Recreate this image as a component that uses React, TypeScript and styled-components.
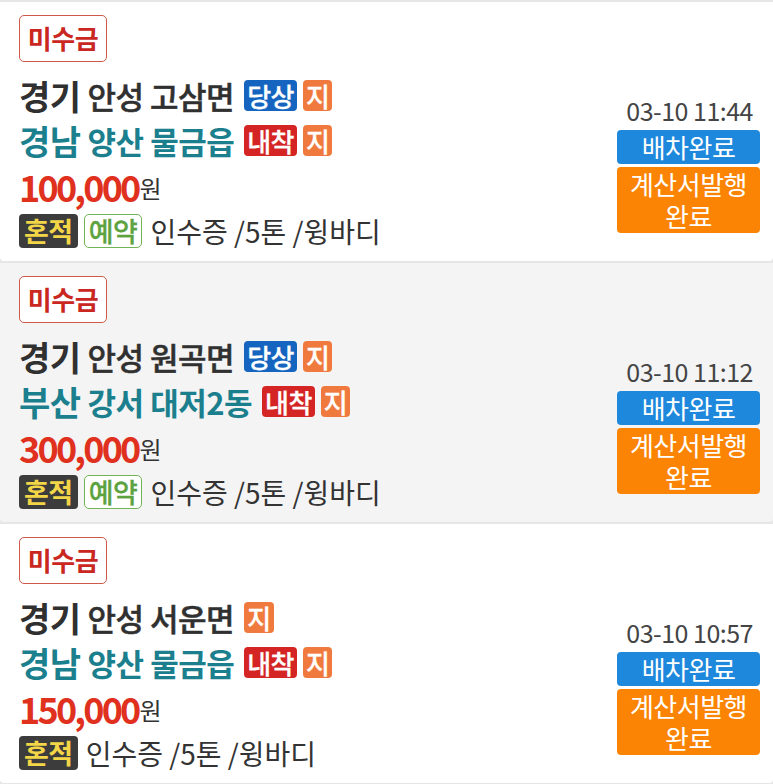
import React from 'react';
import styled, { createGlobalStyle } from 'styled-components';

const GlobalStyle = createGlobalStyle`
  html, body {
    margin: 0;
    padding: 0;
    background: #e6e6e6;
    font-family: "Noto Sans CJK KR", "Noto Sans", sans-serif;
  }
`;

type TagKind = 'blue' | 'red' | 'orange';

type Order = {
  id: number;
  fromMain: string;
  fromSub: string;
  fromTags: TagKind[];
  toMain: string;
  toSub: string;
  toTags: TagKind[];
  price: string;
  reserved: boolean;
  time: string;
  shaded?: boolean;
};

const tagText: Record<TagKind, string> = {
  blue: '당상',
  red: '내착',
  orange: '지',
};

const tagColor: Record<TagKind, string> = {
  blue: '#1565c0',
  red: '#d42424',
  orange: '#f07a3e',
};

const orders: Order[] = [
  {
    id: 1,
    fromMain: '경기', fromSub: '안성 고삼면', fromTags: ['blue', 'orange'],
    toMain: '경남', toSub: '양산 물금읍', toTags: ['red', 'orange'],
    price: '100,000', reserved: true, time: '03-10 11:44',
  },
  {
    id: 2,
    fromMain: '경기', fromSub: '안성 원곡면', fromTags: ['blue', 'orange'],
    toMain: '부산', toSub: '강서 대저2동', toTags: ['red', 'orange'],
    price: '300,000', reserved: true, time: '03-10 11:12', shaded: true,
  },
  {
    id: 3,
    fromMain: '경기', fromSub: '안성 서운면', fromTags: ['orange'],
    toMain: '경남', toSub: '양산 물금읍', toTags: ['red', 'orange'],
    price: '150,000', reserved: false, time: '03-10 10:57',
  },
];

export default function App() {
  return (
    <>
      <GlobalStyle />
      <List>
        {orders.map((o) => (
          <Card key={o.id} $shaded={o.shaded}>
            <Left>
              <Unpaid>미수금</Unpaid>
              <Line>
                <Main>{o.fromMain}</Main>
                <Sub>{o.fromSub}</Sub>
                {o.fromTags.map((t, i) => (
                  <Tag key={i} $color={tagColor[t]}>{tagText[t]}</Tag>
                ))}
              </Line>
              <Line $teal>
                <Main>{o.toMain}</Main>
                <Sub $bold>{o.toSub}</Sub>
                {o.toTags.map((t, i) => (
                  <Tag key={i} $color={tagColor[t]}>{tagText[t]}</Tag>
                ))}
              </Line>
              <Line>
                <Price>{o.price}</Price>
                <Won>원</Won>
              </Line>
              <Line>
                <Mixed>혼적</Mixed>
                {o.reserved && <Reserved>예약</Reserved>}
                <Info>인수증 /5톤 /윙바디</Info>
              </Line>
            </Left>
            <Right>
              <Time>{o.time}</Time>
              <Status $color="#1e88dc">배차완료</Status>
              <Status $color="#fb8404">계산서발행 완료</Status>
            </Right>
          </Card>
        ))}
      </List>
    </>
  );
}

const List = styled.div`
  display: flex;
  flex-direction: column;
  gap: 2px;
  padding-top: 2px;
  width: 773px;
  height: 784px;
  overflow: hidden;
`;

const Card = styled.div<{ $shaded?: boolean }>`
  display: flex;
  justify-content: space-between;
  flex-shrink: 0;
  height: 259px;
  box-sizing: border-box;
  padding: 13px 13px 0 19px;
  background: ${(p) => (p.$shaded ? '#f4f4f4' : '#ffffff')};
  border-radius: 0 0 4px 4px;
`;

const Left = styled.div`
  display: flex;
  flex-direction: column;
`;

const Unpaid = styled.div`
  align-self: flex-start;
  box-sizing: border-box;
  width: 88px;
  height: 47px;
  margin-bottom: 11px;
  border: 1.5px solid #cf5a4a;
  border-radius: 5px;
  color: #c9271f;
  font-size: 26px;
  font-weight: 700;
  line-height: 43px;
  text-align: center;
  letter-spacing: -0.5px;
  background: #fff;
`;

const Line = styled.div<{ $teal?: boolean }>`
  display: flex;
  align-items: center;
  height: 45px;
  line-height: 1;
  color: ${(p) => (p.$teal ? '#1b7f8e' : '#303030')};
  white-space: nowrap;
`;

const Main = styled.span`
  font-size: 34px;
  font-weight: 700;
  margin-right: 7px;
  letter-spacing: -0.5px;
`;

const Sub = styled.span<{ $bold?: boolean }>`
  font-size: 31px;
  font-weight: ${(p) => (p.$bold ? 700 : 500)};
  -webkit-text-stroke: ${(p) => (p.$bold ? '0' : '0.5px currentColor')};
  letter-spacing: -0.5px;
  margin-right: 4px;
`;

const Tag = styled.span<{ $color: string }>`
  display: inline-flex;
  align-items: center;
  justify-content: center;
  height: 31px;
  padding: 0 3px;
  margin-left: 6px;
  border-radius: 4px;
  background: ${(p) => p.$color};
  color: #fff;
  font-size: 26px;
  font-weight: 500;
  -webkit-text-stroke: 0.3px currentColor;
  letter-spacing: -0.5px;
`;

const Price = styled.span`
  color: #e0301e;
  font-size: 36px;
  font-weight: 700;
  letter-spacing: -2.8px;
`;

const Won = styled.span`
  color: #333;
  font-size: 24px;
  margin-left: 1px;
  margin-top: 4px;
`;

const Mixed = styled.span`
  display: inline-flex;
  align-items: center;
  height: 34px;
  padding: 0 5px;
  border-radius: 4px;
  background: #3c3c3c;
  color: #f3d548;
  font-size: 27px;
  font-weight: 700;
  letter-spacing: -0.5px;
`;

const Reserved = styled.span`
  display: inline-flex;
  align-items: center;
  box-sizing: border-box;
  height: 34px;
  padding: 0 4px;
  margin-left: 6px;
  border: 1.5px solid #72b455;
  border-radius: 5px;
  background: #fff;
  color: #5ca33f;
  font-size: 27px;
  font-weight: 500;
  -webkit-text-stroke: 0.3px currentColor;
  letter-spacing: -0.5px;
`;

const Info = styled.span`
  margin-left: 8px;
  font-size: 28px;
  color: #333;
`;

const Right = styled.div`
  display: flex;
  flex-direction: column;
  align-items: stretch;
  width: 143px;
  margin-top: 80px;
  gap: 3px;
`;

const Time = styled.div`
  text-align: right;
  padding-right: 7px;
  font-size: 25px;
  color: #444;
  letter-spacing: -0.5px;
  line-height: 30px;
  margin-bottom: 2px;
`;

const Status = styled.div<{ $color: string }>`
  background: ${(p) => p.$color};
  color: #fff;
  border-radius: 4px;
  font-size: 26px;
  line-height: 32px;
  padding: 1px 4px 1px;
  text-align: center;
  letter-spacing: -0.5px;
`;
